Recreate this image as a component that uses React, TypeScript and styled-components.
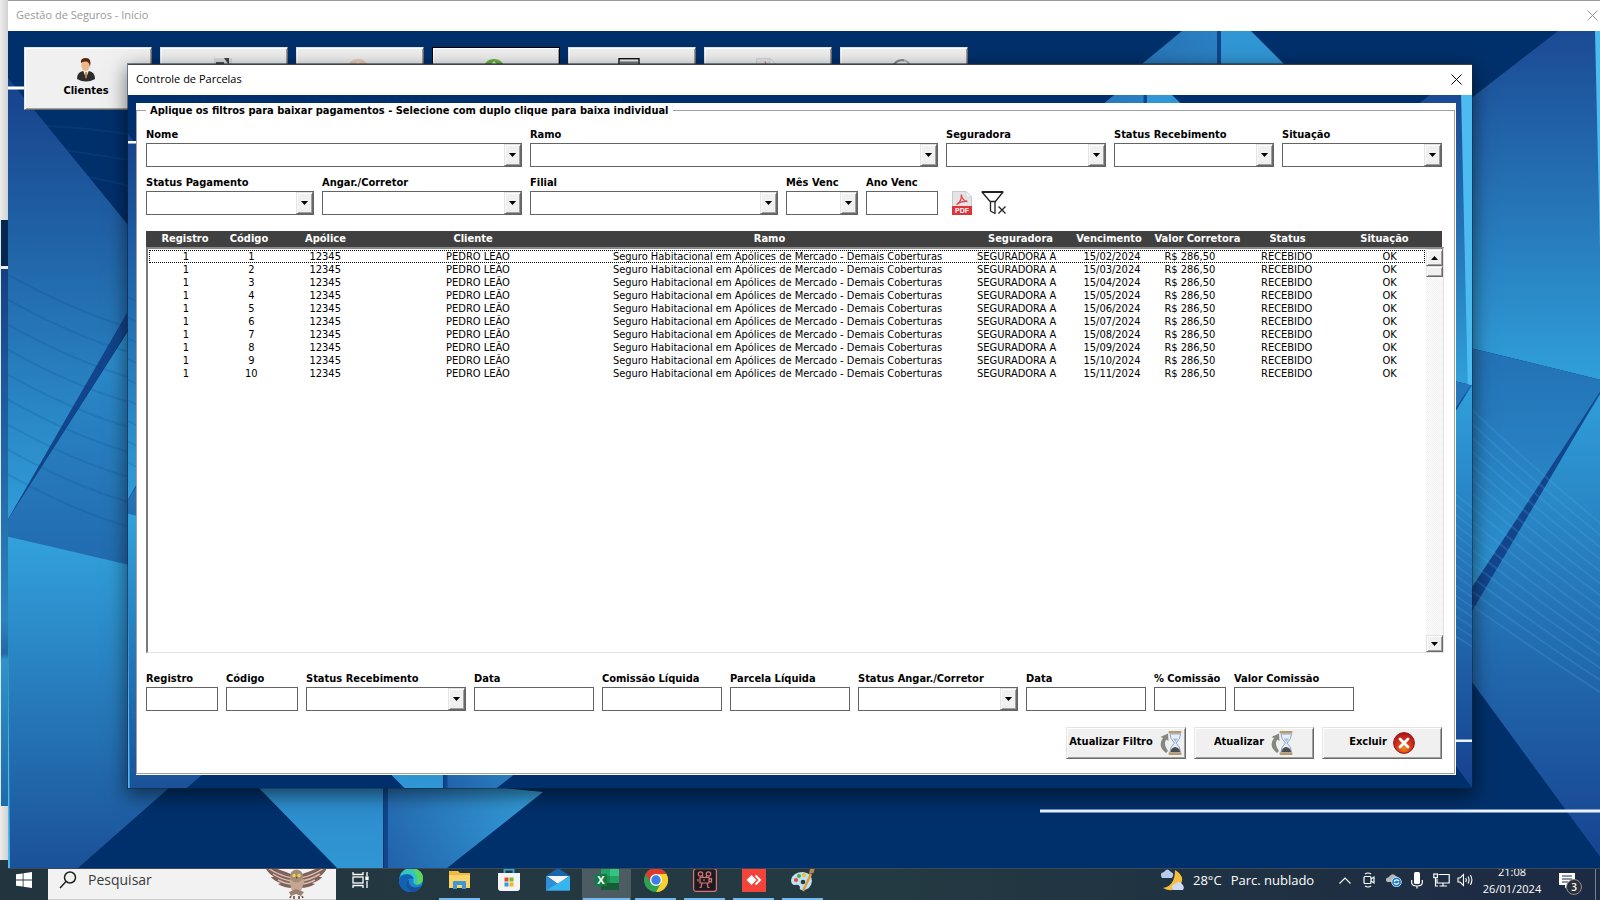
import React, { useId } from "react";
import styled, { createGlobalStyle, css } from "styled-components";

const NAVY = "#00306b";
const FORM_FONT = '"DejaVu Sans Condensed", "DejaVu Sans", Tahoma, sans-serif';
const UI_FONT = '"Open Sans", "Segoe UI", sans-serif';

const GlobalStyle = createGlobalStyle`
  *, *::before, *::after { box-sizing: border-box; }
  body { margin: 0; font-family: ${FORM_FONT}; font-size: 11px; color: #000; background: #ececec; }
  button, input, select { font: inherit; color: inherit; margin: 0; border-radius: 0; }
`;

const raised = css`
  background: #f0f0f0;
  border: 1px solid;
  border-color: #e3e3e3 #696969 #696969 #e3e3e3;
  box-shadow: inset 1px 1px 0 #fff, inset -1px -1px 0 #a0a0a0;
`;

/* ---------- desktop and windows ---------- */

const Desktop = styled.div`
  min-height: 100vh;
  display: flex;
  flex-direction: column;
`;

const Workspace = styled.div`
  flex: 1;
  display: grid;
  grid-template-columns: 8px minmax(0, 1fr);
`;

const BackWindow = styled.div`
  padding-top: 220px;
  padding-bottom: 54px;
  display: flex;
  background: linear-gradient(90deg, #ebebeb, #d2d2d2);
`;

const BackWindowEdge = styled.div`
  flex: 1;
  border-left: 1px solid #d8e8f4;
  background: linear-gradient(
    #04264f 0 46px,
    #e8f2fb 46px 49px,
    #173f80 49px,
    #1c5598 25%,
    #2b83bd 68%,
    #2268a4 74%,
    #3093c8 75%,
    #206ba8 100%
  );
`;

const MainWindow = styled.div`
  position: relative;
  z-index: 1;
  margin-bottom: -9px;
  display: flex;
  flex-direction: column;
  border-top: 1px solid #9a9a9a;
  border-bottom: 1px solid #3c4a58;
  background: ${NAVY};
  overflow: hidden;
`;

const TitleBar = styled.header<{ $active?: boolean }>`
  position: relative;
  display: flex;
  justify-content: space-between;
  height: 30px;
  padding-left: 8px;
  background: #fff;
  font-family: ${UI_FONT};
  font-size: 11px;
  line-height: 28px;
  color: ${p => (p.$active ? "#000" : "#999")};
`;

const CloseButton = styled.button<{ $edge?: boolean }>`
  display: grid;
  place-items: center;
  width: ${p => (p.$edge ? 15 : 31)}px;
  height: 28px;
  padding: 0;
  border: 0;
  background: none;
`;

const WindowBody = styled.div`
  position: relative;
  flex: 1;
  display: flex;
  flex-direction: column;
`;

const ArtSvg = styled.svg<{ $overhang: number }>`
  position: absolute;
  top: 0;
  left: 0;
  width: calc(100% + ${p => p.$overhang}px);
  height: 100%;
`;

const Toolbar = styled.nav`
  position: relative;
  display: flex;
  gap: 8px;
  padding: 16px 16px 0;
`;

const ToolButton = styled.button<{ $focused?: boolean }>`
  ${raised}
  width: 128px;
  height: 63px;
  padding: 10px 4px 0 0;
  display: flex;
  flex-direction: column;
  align-items: center;
  gap: 2px;
  font-weight: 700;
  line-height: 14px;
  outline: ${p => (p.$focused ? "1px solid #000" : "none")};
  outline-offset: -1px;
`;

const Dialog = styled.section`
  position: relative;
  flex: 1;
  margin: -46px 128px 80px 120px;
  display: flex;
  flex-direction: column;
  border-top: 1px solid #444;
  background: ${NAVY};
  box-shadow: 0 0 0 1px rgba(20, 40, 60, 0.5), 0 6px 18px 2px rgba(0, 0, 0, 0.5);
`;

const Panel = styled.form`
  position: relative;
  flex: 1;
  display: flex;
  margin: 8px 16px 13px 8px;
  background: #fff;
`;

const FilterGroup = styled.fieldset`
  flex: 1;
  min-width: 0;
  margin: 0 1px 1px 0;
  padding: 10px 12px 14px 9px;
  border: 1px solid #a0a0a0;
  display: flex;
  flex-direction: column;
`;

const Legend = styled.legend`
  padding: 1px 4px 0;
  font-weight: 700;
  line-height: 13px;
`;

const Stack = styled.div`
  flex: 1;
  display: flex;
  flex-direction: column;
`;

/* ---------- form controls ---------- */

const FieldRow = styled.div<{ $columns: string; $gapTop?: number }>`
  display: grid;
  grid-template-columns: ${p => p.$columns};
  column-gap: 8px;
  align-items: end;
  margin-top: ${p => p.$gapTop ?? 0}px;
`;

const FieldBox = styled.div`
  min-width: 0;
  display: flex;
  flex-direction: column;
`;

const Label = styled.label`
  font-weight: 700;
  line-height: 16px;
  white-space: nowrap;
`;

const TextInput = styled.input`
  width: 100%;
  height: 24px;
  padding: 0 4px;
  border: 1px solid #646464;
  background: #fff;
  outline: none;
`;

const ComboFrame = styled.div`
  display: grid;
  height: 24px;
`;

const Select = styled.select`
  grid-area: 1 / 1;
  appearance: none;
  width: 100%;
  height: 24px;
  padding: 0 18px 0 4px;
  border: 1px solid #646464;
  background: #fff;
  outline: none;
`;

const ComboArrow = styled.span`
  ${raised}
  grid-area: 1 / 1;
  justify-self: end;
  display: grid;
  place-items: center;
  width: 17px;
  height: 22px;
  margin: 1px 1px 0 0;
  pointer-events: none;
`;

const IconGroup = styled.div`
  display: flex;
  gap: 4px;
  padding-left: 2px;
`;

const IconButton = styled.button`
  display: grid;
  place-items: center;
  width: 28px;
  height: 24px;
  padding: 0;
  border: 0;
  background: none;
`;

/* ---------- table ---------- */

const HEAD_COLUMNS = "78fr 50fr 103fr 192fr 401fr 101fr 76fr 101fr 79fr 115fr";
const BODY_COLUMNS = "74fr 57fr 91fr 215fr 385fr 94fr 97fr 59fr 135fr 71fr";

const GridArea = styled.div`
  flex: 1;
  margin: 16px -2px 0 0;
  min-height: 200px;
  display: grid;
  grid-template-rows: 16px minmax(0, 1fr);
  grid-template-columns: minmax(0, 1fr) 18px;
`;

const ListFrame = styled.div`
  grid-area: 2 / 1 / 3 / 3;
  border: 1px solid;
  border-width: 2px 1px 1px 2px;
  border-color: #8a8a8a #e3e3e3 #e3e3e3 #7a7a7a;
`;

const Table = styled.table`
  grid-area: 1 / 1 / 3 / 3;
  display: block;
  line-height: 13px;
`;

const Head = styled.thead`
  display: block;
  margin-right: 2px;
  background: #404040;
  color: #fff;
`;

const HeadRow = styled.tr`
  display: grid;
  grid-template-columns: ${HEAD_COLUMNS};
  height: 16px;
`;

const HeadCell = styled.th`
  padding: 0;
  line-height: 15px;
  text-align: center;
  white-space: nowrap;
`;

const Body = styled.tbody`
  display: block;
  padding: 3px 19px 0 3px;
`;

const BodyRow = styled.tr<{ $focused?: boolean }>`
  display: grid;
  grid-template-columns: ${BODY_COLUMNS};
  height: 13px;
  outline: ${p => (p.$focused ? "1px dotted #000" : "none")};
  outline-offset: ${p => (p.$focused ? "-1px" : "0")};
`;

const Cell = styled.td`
  padding: 0;
  min-width: 0;
  display: flex;
  justify-content: center;
  white-space: nowrap;
`;

const ScrollBar = styled.div`
  grid-area: 2 / 2;
  display: flex;
  flex-direction: column;
  margin: 2px 1px 1px 0;
  background: repeating-conic-gradient(#f0f0f0 0 25%, #fff 0 50%) 0 0 / 2px 2px;
`;

const ScrollButton = styled.button`
  ${raised}
  height: 17px;
  padding: 0;
  display: grid;
  place-items: center;
`;

const ScrollThumb = styled.div`
  ${raised}
  height: 11px;
  margin-bottom: auto;
`;

/* ---------- actions ---------- */

const Actions = styled.div`
  display: flex;
  justify-content: flex-end;
  gap: 8px;
  margin-top: 16px;
`;

const ActionButton = styled.button`
  ${raised}
  width: 120px;
  height: 32px;
  padding: 0;
  display: flex;
  align-items: center;
  justify-content: center;
  gap: 6px;
  font-weight: 700;
  white-space: nowrap;
`;

const ActionText = styled.span`
  padding-bottom: 4px;
`;

/* ---------- taskbar ---------- */

const Taskbar = styled.footer`
  display: flex;
  height: 40px;
  background: linear-gradient(90deg, #22353e, #243a42 55%, #1f3242 75%, #1d2a44);
  color: #fff;
  font-family: ${UI_FONT};
  font-size: 13px;
`;

const TaskButton = styled.button<{ $open?: boolean; $active?: boolean; $width?: number }>`
  position: relative;
  display: grid;
  place-items: center;
  width: ${p => p.$width ?? 49}px;
  height: 40px;
  padding: 0;
  border: 0;
  background: ${p => (p.$active ? "#4d5c63" : "none")};
  &::after {
    content: "";
    position: absolute;
    inset: auto ${p => (p.$active ? 1 : 4)}px 0;
    height: 2px;
    background: ${p => (p.$open ? "#76b9ed" : "none")};
  }
`;

const SearchBox = styled.label`
  display: flex;
  align-items: center;
  width: 288px;
  padding-left: 11px;
  gap: 11px;
  background: #f2f2f2;
  border-bottom: 1px solid #ccc;
`;

const SearchInput = styled.input`
  flex: 1;
  min-width: 0;
  padding: 0;
  border: 0;
  background: none;
  outline: none;
  font-size: 14px;
  &::placeholder { color: #3a3a3a; opacity: 1; }
`;

const Tray = styled.div`
  margin-left: auto;
  display: flex;
  align-items: center;
`;

const Weather = styled.button`
  display: flex;
  align-items: center;
  gap: 9px;
  padding: 0;
  width: 173px;
  border: 0;
  background: none;
  white-space: nowrap;
`;

const TrayButton = styled.button`
  display: grid;
  place-items: center;
  width: 24px;
  height: 40px;
  padding: 0;
  border: 0;
  background: none;
`;

const Clock = styled.div`
  width: 70px;
  text-align: center;
  font-size: 11px;
  line-height: 17px;
`;

const Notifications = styled.button`
  position: relative;
  width: 40px;
  height: 40px;
  margin-right: 8px;
  padding: 0;
  border: 0;
  background: none;
  display: grid;
  place-items: center;
`;

const Badge = styled.span`
  position: absolute;
  right: 5px;
  bottom: 5px;
  width: 16px;
  height: 16px;
  border: 1px solid #8a8f96;
  border-radius: 50%;
  background: #2c3038;
  font-size: 10px;
  line-height: 14px;
  font-weight: 600;
`;

const ShowDesktop = styled.button`
  width: 5px;
  height: 40px;
  padding: 0;
  border: 0;
  border-left: 1px solid #77808c;
  background: none;
`;

/* ---------- drawings ---------- */

const RIGHT_LINES = Array.from({ length: 15 }, (_, i) => i);
const LEFT_LINES = Array.from({ length: 9 }, (_, i) => i);

function Art({ overhang = 0 }: { overhang?: number }) {
  const id = useId();
  const g = (n: string) => `url(#${id}${n})`;
  const grad = (n: string, from: string, to: string, [x1, y1, x2, y2] = [0, 0, 0, 1]) => (
    <linearGradient id={id + n} x1={x1} y1={y1} x2={x2} y2={y2}>
      <stop offset="0" stopColor={from} />
      <stop offset="1" stopColor={to} />
    </linearGradient>
  );
  return (
    <ArtSvg $overhang={overhang} viewBox="8 31 1600 838" preserveAspectRatio="none" aria-hidden="true">
      <defs>
        {grad("a", "#17418a", "#309dd8")}
        {grad("b", "#309ad6", "#2168ad")}
        {grad("c", "#32a2dc", "#1b5198")}
        {grad("d", "#1b4a94", "#30a0da")}
        {grad("e", "#2270b4", "#2f9ad6")}
        {grad("f", "#30a0da", "#17418e")}
        {grad("h", "#2368ae", "#2b80c2", [0, 0, 1, 0])}
        {grad("i", "#2a7fc4", "#3096d4")}
        {grad("j", "#36a6e0", "#2262aa", [1, 0.4, 0, 1])}
      </defs>
      <rect x="8" y="31" width="1600" height="838" fill={NAVY} />
      <path d="M127 224 L8 78 L8 520 L127 318Z" fill={g("a")} />
      <path d="M127 224 L190 300 L127 330Z" fill="#1c5a9e" />
      <path d="M8 520 L127 313 V332Z" fill="#12458c" />
      <path d="M8 520 L127 333 L190 250 V582 L8 537Z" fill={g("b")} />
      <path d="M8 537 L190 580 L260 700 L170 788 L78 869 H8Z" fill={g("c")} />
      <path d="M8 640 V869 H10Z" fill="#4cbcf0" />
      <g fill="none" stroke="#0a3f80" strokeOpacity=".15" strokeWidth="2">
        {LEFT_LINES.map(i => (
          <path key={i} d={`M8 ${275 + i * 25} Q70 ${310 + i * 25} 127 ${327 + i * 25}`} />
        ))}
      </g>
      <g fill="none" stroke="#1c5a9c" strokeOpacity=".2" strokeWidth="2">
        <path d="M45 126 Q90 128 128 134" />
        <path d="M62 150 Q95 155 128 160" />
        <path d="M82 176 Q105 180 128 186" />
      </g>
      <path d="M8 88 H130" stroke="#fff" strokeWidth="3" />

      <path d="M180 700 L258 788 L337 869 H383 V700Z" fill={g("i")} />
      <path d="M388 700 V869 H447 L543 793 L505 789Z" fill={g("j")} />
      <path d="M382 700 H388 L388 869 H384Z" fill="#12458c" />

      <path d="M1050 140 L1182 31 H1219 V140Z" fill={g("h")} />
      <path d="M1217 31 H1222 V140 H1217Z" fill="#12458c" />
      <path d="M1221 31 H1251 L1350 130 H1221Z" fill="#3096d4" />

      <path d="M1558 31 H1608 V382 L1420 336 V138Z" fill={g("d")} />
      <path d="M1595 31 H1608 V382 H1603Z" fill="#4cbcf0" />
      <path d="M1420 336 L1608 382 L1450 636 L1420 560Z" fill={g("e")} />
      <path d="M1608 382 V869 L1472 683 L1466 610Z" fill={g("f")} />
      <path d="M1608 380 L1472 588 L1455 640 L1472 612Z" fill="#12458c" />
      <g fill="none" stroke="#56b4ea" strokeOpacity=".2" strokeWidth="2">
        {RIGHT_LINES.map(i => (
          <path key={i} d={`M1472 ${410 + i * 14} Q1530 ${466 + i * 13} 1608 ${530 + i * 12}`} />
        ))}
      </g>
      <path d="M1472 683 L1608 869 H1472Z" fill={NAVY} />
      <path d="M1040 812 H1608" stroke="#e8f4ff" strokeWidth="3" />
    </ArtSvg>
  );
}

const Cross = () => (
  <svg width="11" height="11" viewBox="0 0 11 11" stroke="currentColor" fill="none" aria-hidden="true">
    <path d="M.5 .5 L10.5 10.5 M10.5 .5 L.5 10.5" />
  </svg>
);

const Triangle = ({ up }: { up?: boolean }) => (
  <svg width="7" height="4" viewBox="0 0 7 4" aria-hidden="true">
    <path d={up ? "M0 4 H7 L3.5 0Z" : "M0 0 H7 L3.5 4Z"} />
  </svg>
);

const PersonIcon = () => (
  <svg width="24" height="24" viewBox="0 0 24 24" aria-hidden="true">
    <path d="M3 21 Q3 14 9 13 L15 13 Q21 14 21 21 Q12 26 3 21Z" fill="#2c2c2e" />
    <path d="M9 12.500 L12 20 L15 12.500Z" fill="#e8e8e8" />
    <path d="M11.300 14 H12.800 L13 19 L12 21 L11 19Z" fill="#c87a20" />
    <ellipse cx="11.500" cy="7" rx="4.300" ry="6" fill="#eeb98a" />
    <path d="M7 5 Q6 0 12 0 Q18 0 16 9 Q15.500 4.500 12.500 3.600 Q9 3 7 5Z" fill="#5e2612" />
  </svg>
);

const PenDocIcon = () => (
  <svg width="24" height="24" viewBox="0 0 24 24" aria-hidden="true">
    <path d="M4 0 H22 V22 H4Z" fill="#dcdcdc" />
    <path d="M14 0 H19 V7Z" fill="#444" />
    <path d="M6 5 H14" stroke="#555" strokeWidth="2" />
  </svg>
);

const DiscIcon = ({ fill, arrow }: { fill: string; arrow: string }) => (
  <svg width="24" height="24" viewBox="0 0 24 24" aria-hidden="true">
    <circle cx="12" cy="12" r="11" fill={fill} />
    <path d="M12 3 L18 10 H14 V19 H10 V10 H6Z" fill={arrow} />
  </svg>
);

const WindowIcon = () => (
  <svg width="24" height="24" viewBox="0 0 24 24" fill="none" stroke="#111" aria-hidden="true">
    <rect x="1" y=".7" width="20" height="20" strokeWidth="1.400" />
    <path d="M2 4.500 H20" stroke="#777" strokeWidth="2" />
  </svg>
);

const GaugeIcon = () => (
  <svg width="24" height="24" viewBox="0 0 24 24" fill="none" aria-hidden="true">
    <circle cx="12" cy="11" r="9" stroke="#b4b4b4" strokeWidth="2" />
    <path d="M3 8 Q7 1 14 2.500" stroke="#8a8a8a" strokeWidth="2" />
  </svg>
);

const PdfIcon = ({ faded }: { faded?: boolean }) => (
  <svg width="20" height="24" viewBox="0 0 20 24" opacity={faded ? 0.7 : 1} aria-hidden="true">
    <path d="M.5 .5 H14 L19.500 6 V23.500 H.5Z" fill="#e4e4e6" stroke="#c9c9cb" />
    <path d="M14 .5 V6 H19.500Z" fill="#fafafa" stroke="#c4c4c6" strokeWidth=".6" />
    <path d="M4.500 13.500 Q10 10.500 9.300 3.500 Q10 9.500 15.500 10.500 Q9 10 4.500 13.500Z" fill="none" stroke="#e2474d" strokeWidth="1.300" />
    <rect y="15" width="20" height="9" fill="#dd3439" />
    <text x="10" y="22" fontFamily="Liberation Sans, sans-serif" fontSize="7" fontWeight="700" fill="#fff" textAnchor="middle">PDF</text>
  </svg>
);

const FunnelIcon = () => (
  <svg width="26" height="24" viewBox="0 0 26 24" fill="none" stroke="#222" strokeWidth="1.300" aria-hidden="true">
    <path d="M1 1 H22 L14 11 V22.500 L9.500 20 V11Z" strokeLinejoin="round" />
    <path d="M1 1 H22" strokeWidth="2" />
    <path d="M9.500 10.500 H14" strokeWidth="1.500" />
    <path d="M17.500 15.500 L24.500 22.500 M24.500 15.500 L17.500 22.500" />
  </svg>
);

const HourglassIcon = () => (
  <svg width="24" height="24" viewBox="0 0 24 24" aria-hidden="true">
    <path d="M7 22 Q-2 15 4 7 L1.500 6 L9 2.500 L9.500 10 L7.200 8.500 Q4 14 9 20Z" fill="#85887f" />
    <rect x="9.500" y="0" width="13" height="2.600" rx="1" fill="#b79a6c" />
    <rect x="9.500" y="21.300" width="13" height="2.600" rx="1" fill="#b79a6c" />
    <path d="M11 3 H21.500 Q21.500 8 17 12 Q21.500 16 21.500 21 H11 Q11 16 15.500 12 Q11 8 11 3Z" fill="#e6f0fa" stroke="#8fa6c4" />
    <path d="M11.500 21 Q12 16.500 16.300 16 Q21 17 21 21Z" fill="#4a4f4c" />
    <path d="M13.500 7.500 H19 L16.300 11Z" fill="#a9bdd6" />
  </svg>
);

const DeleteIcon = () => {
  const id = useId();
  return (
    <svg width="22" height="22" viewBox="0 0 22 22" aria-hidden="true">
      <radialGradient id={id} cx=".5" cy=".75" r=".7">
        <stop offset="0" stopColor="#f08a1c" />
        <stop offset=".5" stopColor="#d2371a" />
        <stop offset="1" stopColor="#b3151a" />
      </radialGradient>
      <circle cx="11" cy="11" r="10.400" fill={`url(#${id})`} stroke="#8f1216" />
      <path d="M7 7 L15 15 M15 7 L7 15" stroke="#fff" strokeWidth="2.800" strokeLinecap="round" />
    </svg>
  );
};

const WindowsLogo = () => (
  <svg width="16" height="16" viewBox="0 0 16 16" fill="#fff" aria-hidden="true">
    <path d="M0 2.300 L6.700 1.400 V7.600 H0Z M7.500 1.300 L16 0 V7.600 H7.500Z M0 8.400 H6.700 V14.600 L0 13.700Z M7.500 8.400 H16 V16 L7.500 14.700Z" />
  </svg>
);

const SearchIcon = () => (
  <svg width="18" height="18" viewBox="0 0 18 18" fill="none" stroke="#222" strokeWidth="1.500" aria-hidden="true">
    <circle cx="11" cy="6.500" r="5.500" />
    <path d="M7 10.500 L1 17" />
  </svg>
);

const OwlIcon = () => (
  <svg width="72" height="40" viewBox="0 0 72 40" aria-hidden="true">
    <path d="M0 4 Q10 8 22 12 Q28 14 31 17 L29 28 Q20 28 14 24 L17 23 Q10 21 7 17 L10 17 Q2 12 0 4Z" fill="#80605a" />
    <path d="M64 4 Q54 8 44 12 Q37 14 34 17 L36 28 Q45 28 51 24 L48 23 Q55 21 58 17 L55 17 Q63 12 64 4Z" fill="#80605a" />
    <path d="M4 8 Q14 15 28 18 M9 14 Q18 20 28 21 M14 20 Q22 24 28 24 M60 8 Q50 15 37 18 M56 14 Q46 20 37 21 M51 20 Q43 24 37 24" stroke="#d8bfae" strokeWidth="1.500" fill="none" />
    <path d="M25 20 Q32 15 41 20 L37 31 L32 34 L28 31Z" fill="#c4a692" />
    <path d="M25 32 L32 29 L40 32 L37 36 L32 34 L27 36Z" fill="#9c7f70" />
    <ellipse cx="32.500" cy="16" rx="6.500" ry="6.500" fill="#a58c78" />
    <circle cx="30" cy="15.500" r="1.700" fill="#e9d44a" />
    <circle cx="35" cy="15.500" r="1.700" fill="#e9d44a" />
    <path d="M32 17 H33.500 L32.700 19Z" fill="#4a3a30" />
    <path d="M27 36 L26 38 M30 36 V39 M35 36 V39 M38 36 L39 38" stroke="#5c463c" strokeWidth="1.500" />
  </svg>
);

const TaskViewIcon = () => (
  <svg width="18" height="18" viewBox="0 0 18 18" fill="none" stroke="#fff" strokeWidth="1.300" aria-hidden="true">
    <path d="M1 1 V3.500 H11 V1 M1 17 V14.500 H11 V17" />
    <rect x="1" y="6" width="10" height="6" />
    <path d="M15 1 V5 M15 10 V17" />
    <rect x="14" y="6" width="2" height="2.500" fill="#fff" />
  </svg>
);

const EdgeIcon = () => (
  <svg width="24" height="24" viewBox="0 0 24 24" aria-hidden="true">
    <circle cx="12" cy="12" r="12" fill="#1a86d0" />
    <path d="M1 8 Q4 0 12 0 Q24 1 24 11 Q23 17 17 16.500 Q14 16 14.500 13 Q15 7 9 6 Q4 5.500 1 8Z" fill="#37c5c0" />
    <path d="M14 .3 Q24 2 24 11 Q23 17 17 16.500 Q20 11 17 6Z" fill="#5fd45a" />
    <path d="M0 12 Q2 6 9 6.500 Q14 7 14.700 11 Q8 9 7.500 15 Q8 21 13 23.900 Q0 24 0 12Z" fill="#0f62b4" />
    <path d="M10 12 Q9 19 16 19.500 Q20 19.500 22 17.500 Q19 24 13 23.900 Q7 21 7.500 15 Q8 12 10 12Z" fill="#1b4f9c" />
  </svg>
);

const ExplorerIcon = () => (
  <svg width="24" height="24" viewBox="0 0 24 24" aria-hidden="true">
    <path d="M1 3 H10 L12 5 H22 V20 H1Z" fill="#f3b93c" />
    <path d="M1 7 H22 V20 H1Z" fill="#fbd568" />
    <path d="M5 21 V14 Q5 13 6 13 H17 Q18 13 18 14 V21 H14 V17 H9 V21Z" fill="#3f97d8" />
  </svg>
);

const StoreIcon = () => (
  <svg width="24" height="24" viewBox="0 0 24 24" aria-hidden="true">
    <path d="M7.500 6 V1.500 H16.500 V6" fill="none" stroke="#38a3df" strokeWidth="2" />
    <path d="M1 5 H23 V20 Q23 23 20 23 H4 Q1 23 1 20Z" fill="#f4f4f4" />
    <path d="M7.500 9.500 H11.500 V13.500 H7.500Z" fill="#e74c2c" />
    <path d="M12.500 9.500 H16.500 V13.500 H12.500Z" fill="#7db928" />
    <path d="M7.500 14.500 H11.500 V18.500 H7.500Z" fill="#2c9fe0" />
    <path d="M12.500 14.500 H16.500 V18.500 H12.500Z" fill="#f5b51e" />
  </svg>
);

const MailIcon = () => (
  <svg width="24" height="24" viewBox="0 0 24 24" aria-hidden="true">
    <path d="M0 8 L12 0 L24 8 V22 H0Z" fill="#1a65b0" />
    <path d="M1 8 H23 L12 16Z" fill="#f5f5f5" />
    <path d="M0 8 L12 16 L24 22.500 H0Z" fill="#2c8fd8" />
    <path d="M24 8 L0 22.500 H24Z" fill="#38b4ee" />
  </svg>
);

const ExcelIcon = () => (
  <svg width="24" height="24" viewBox="0 0 24 24" aria-hidden="true">
    <path d="M6 1 H24 V22 H6Z" fill="#1f8a50" />
    <path d="M15 1 H24 V8 H15Z" fill="#35c481" />
    <path d="M6 1 H15 V8 H6Z" fill="#23a366" />
    <path d="M15 8 H24 V15 H15Z" fill="#22a163" />
    <path d="M6 15 H24 V22 H6Z" fill="#185c37" />
    <rect y="6" width="12" height="12" rx="1" fill="#117c42" />
    <text x="6" y="16" fontFamily="Open Sans, sans-serif" fontSize="11" fontWeight="700" fill="#fff" textAnchor="middle">X</text>
  </svg>
);

const ChromeIcon = () => (
  <svg width="24" height="24" viewBox="0 0 24 24" aria-hidden="true">
    <circle cx="12" cy="12" r="12" fill="#2fa24f" />
    <path d="M1.600 6 A12 12 0 0 1 22.400 6 H12 L7 15Z" fill="#db3b2e" />
    <path d="M22.400 6 A12 12 0 0 1 12 24 L17.200 15 L14 6Z" fill="#fccf2f" />
    <circle cx="12" cy="12" r="6" fill="#fff" />
    <circle cx="12" cy="12" r="4.700" fill="#3b7fe8" />
  </svg>
);

const CameraAppIcon = () => (
  <svg width="24" height="24" viewBox="0 0 24 24" fill="none" stroke="#d8766b" strokeWidth="1.200" aria-hidden="true">
    <rect x=".6" y=".6" width="22.800" height="22.800" rx="2.500" fill="#1d1a24" />
    <circle cx="7.500" cy="6" r="2.200" />
    <circle cx="15.500" cy="6" r="2.200" />
    <path d="M9 7.500 L10.500 9.500 M14 7.500 L12.500 9.500 M7 9.500 H16 V15 H7Z M16 11.500 L18.500 10.500 V14 L16 13 M5 11 V13.500 M9 15 L8 19.500 H6.500 M14 15 L15 19.500 H16.500 M10 12 H12" />
  </svg>
);

const AnyDeskIcon = () => (
  <svg width="24" height="24" viewBox="0 0 24 24" aria-hidden="true">
    <rect width="24" height="24" fill="#f4433a" />
    <path d="M9.500 7 L14.500 12 L9.500 17 L4.500 12Z" fill="#fff" />
    <path d="M13.500 7.500 L18 12 L13.500 16.500" fill="none" stroke="#fff" strokeWidth="2" />
  </svg>
);

const PaintIcon = () => (
  <svg width="24" height="24" viewBox="0 0 24 24" aria-hidden="true">
    <path d="M12 4 Q21 5 21 13 Q20 22 11 22 Q8 22 9 19 Q8 16 4 17 Q0 17 0 12 Q2 4 12 4Z" fill="#bfe0ef" />
    <circle cx="5" cy="12" r="2" fill="#e04b3c" />
    <circle cx="8" cy="8" r="2" fill="#52a846" />
    <circle cx="13" cy="7" r="2" fill="#f2bc2e" />
    <circle cx="12" cy="14" r="2.300" fill="#273b46" />
    <path d="M12 23 L20 6" stroke="#e39a3c" strokeWidth="2.500" />
    <path d="M18 6 L19 1 L24 0 L22.500 5Z" fill="#b98555" />
  </svg>
);

const WeatherIcon = () => (
  <svg width="24" height="26" viewBox="0 0 24 26" aria-hidden="true">
    <path d="M15 3 Q27 10 19 20 Q12 26 3 21 Q15 19 15 3Z" fill="#f8bf3e" />
    <path d="M2 11 Q-1 6 4 5 Q7 0 11 5 Q15 6 12 11Z" fill="#b7cdef" />
    <path d="M13 23 Q10 18 15 17 Q19 13 22 17 Q25 20 23 23Z" fill="#cddcf4" />
  </svg>
);

const ChevronUp = () => (
  <svg width="12" height="7" viewBox="0 0 12 7" fill="none" stroke="#fff" strokeWidth="1.200" aria-hidden="true">
    <path d="M.5 6.500 L6 1 L11.500 6.500" />
  </svg>
);

const MeetIcon = () => (
  <svg width="12" height="16" viewBox="0 0 12 16" fill="none" stroke="#fff" strokeWidth="1.200" aria-hidden="true">
    <path d="M2 2 Q5 0 8 2 M2 14 Q5 16 8 14" />
    <rect x="1" y="4.500" width="7" height="7" rx="1" />
    <path d="M8 7 L11 5 V11 L8 9" />
  </svg>
);

const CloudSyncIcon = () => (
  <svg width="17" height="14" viewBox="0 0 17 14" aria-hidden="true">
    <path d="M2 9 Q-1 5 4 4 Q7 -1 11 3 Q13 4 12 9Z" fill="#b5b8bd" />
    <circle cx="11.500" cy="9" r="4.800" fill="#1c79c8" stroke="#e8f2fb" strokeWidth=".8" />
    <path d="M9 8.500 Q11.500 5.500 14 8 M14 9.700 Q11.500 12.500 9 10" fill="none" stroke="#fff" strokeWidth="1.200" />
  </svg>
);

const MicIcon = () => (
  <svg width="12" height="17" viewBox="0 0 12 17" aria-hidden="true">
    <rect x="3" width="6" height="12" rx="1.500" fill="#fff" />
    <path d="M.7 8 V11 Q1 14 6 14 Q11 14 11.300 11 V8 M6 14 V16.500" fill="none" stroke="#fff" strokeWidth="1.200" />
  </svg>
);

const NetworkIcon = () => (
  <svg width="17" height="14" viewBox="0 0 17 14" fill="none" stroke="#fff" strokeWidth="1.200" aria-hidden="true">
    <path d="M5.500 1.500 H16.200 V10 H4 V6 M10 10 V13 M6.500 13 H14" />
    <rect x=".8" y="1" width="3.600" height="3.600" />
    <path d="M2.500 5 V13 H5" />
  </svg>
);

const SpeakerIcon = () => (
  <svg width="17" height="14" viewBox="0 0 17 14" fill="none" stroke="#fff" strokeWidth="1.100" aria-hidden="true">
    <path d="M1 5 H3 L6.500 1.500 V12.500 L3 9 H1Z M8.700 5 Q10 7 8.700 9 M11 3.500 Q13.200 7 11 10.500 M13.300 2 Q16.500 7 13.300 12" />
  </svg>
);

const NoteIcon = () => (
  <svg width="16" height="17" viewBox="0 0 16 17" aria-hidden="true">
    <path d="M0 1 H16 V13 H9 L6 16.500 V13 H0Z" fill="#fff" />
    <path d="M3 4 H13 M3 7 H13 M3 10 H9" stroke="#1d2a44" />
  </svg>
);

/* ---------- composed fields ---------- */

type FieldSpec = { label: string; kind: "combo" | "text" };

function Field({ label, kind }: FieldSpec) {
  const id = useId();
  return (
    <FieldBox>
      <Label htmlFor={id}>{label}</Label>
      {kind === "text" ? (
        <TextInput id={id} type="text" />
      ) : (
        <ComboFrame>
          <Select id={id} defaultValue="">
            <option value="" />
          </Select>
          <ComboArrow><Triangle /></ComboArrow>
        </ComboFrame>
      )}
    </FieldBox>
  );
}

const combo = (label: string): FieldSpec => ({ label, kind: "combo" });
const text = (label: string): FieldSpec => ({ label, kind: "text" });

const FILTERS_TOP = [combo("Nome"), combo("Ramo"), combo("Seguradora"), combo("Status Recebimento"), combo("Situação")];
const FILTERS_BOTTOM = [combo("Status Pagamento"), combo("Angar./Corretor"), combo("Filial"), combo("Mês Venc"), text("Ano Venc")];
const DETAILS = [
  text("Registro"), text("Código"), combo("Status Recebimento"), text("Data"), text("Comissão Líquida"),
  text("Parcela Líquida"), combo("Status Angar./Corretor"), text("Data"), text("% Comissão"), text("Valor Comissão"),
];

const HEADERS = ["Registro", "Código", "Apólice", "Cliente", "Ramo", "Seguradora", "Vencimento", "Valor Corretora", "Status", "Situação"];
const ROWS = Array.from({ length: 10 }, (_, i) => [
  "1",
  String(i + 1),
  "12345",
  "PEDRO LEÃO",
  "Seguro Habitacional em Apólices de Mercado - Demais Coberturas",
  "SEGURADORA A",
  `15/${String(i + 2).padStart(2, "0")}/2024`,
  "R$ 286,50",
  "RECEBIDO",
  "OK",
]);

const APPS: { icon: React.ReactNode; open?: boolean; active?: boolean }[] = [
  { icon: <EdgeIcon /> },
  { icon: <ExplorerIcon />, open: true },
  { icon: <StoreIcon /> },
  { icon: <MailIcon /> },
  { icon: <ExcelIcon />, open: true, active: true },
  { icon: <ChromeIcon />, open: true },
  { icon: <CameraAppIcon />, open: true },
  { icon: <AnyDeskIcon />, open: true },
  { icon: <PaintIcon />, open: true },
];

const TRAY_ICONS = [ChevronUp, MeetIcon, CloudSyncIcon, MicIcon, NetworkIcon, SpeakerIcon];

export default function App() {
  return (
    <Desktop>
      <GlobalStyle />
      <Workspace>
        <BackWindow><BackWindowEdge /></BackWindow>
        <MainWindow>
          <TitleBar>
            <span>Gestão de Seguros - Início</span>
            <CloseButton type="button" $edge><Cross /></CloseButton>
          </TitleBar>
          <WindowBody>
            <Art overhang={8} />
            <Toolbar>
              <ToolButton type="button"><PersonIcon />Clientes</ToolButton>
              <ToolButton type="button"><PenDocIcon /></ToolButton>
              <ToolButton type="button"><DiscIcon fill="#efcdb8" arrow="#f6e4da" /></ToolButton>
              <ToolButton type="button" $focused><DiscIcon fill="#6bb43f" arrow="#d8efc8" /></ToolButton>
              <ToolButton type="button"><WindowIcon /></ToolButton>
              <ToolButton type="button"><PdfIcon faded /></ToolButton>
              <ToolButton type="button"><GaugeIcon /></ToolButton>
            </Toolbar>

            <Dialog role="dialog">
              <TitleBar $active>
                <span>Controle de Parcelas</span>
                <CloseButton type="button"><Cross /></CloseButton>
              </TitleBar>
              <WindowBody>
                <Art />
                <Panel onSubmit={e => e.preventDefault()}>
                  <FilterGroup>
                    <Legend>Aplique os filtros para baixar pagamentos - Selecione com duplo clique para baixa individual</Legend>
                    <Stack>
                      <FieldRow $columns="376fr 408fr 160fr 160fr 160fr">
                        {FILTERS_TOP.map(f => <Field key={f.label} {...f} />)}
                      </FieldRow>
                      <FieldRow $columns="168fr 200fr 248fr 72fr 72fr 496fr" $gapTop={8}>
                        {FILTERS_BOTTOM.map(f => <Field key={f.label} {...f} />)}
                        <IconGroup>
                          <IconButton type="button"><PdfIcon /></IconButton>
                          <IconButton type="button"><FunnelIcon /></IconButton>
                        </IconGroup>
                      </FieldRow>

                      <GridArea>
                        <ListFrame />
                        <Table>
                          <Head>
                            <HeadRow>{HEADERS.map(h => <HeadCell key={h} scope="col">{h}</HeadCell>)}</HeadRow>
                          </Head>
                          <Body>
                            {ROWS.map((row, i) => (
                              <BodyRow key={row[1]} $focused={i === 0}>
                                {row.map((value, c) => <Cell key={HEADERS[c]}>{value}</Cell>)}
                              </BodyRow>
                            ))}
                          </Body>
                        </Table>
                        <ScrollBar>
                          <ScrollButton type="button"><Triangle up /></ScrollButton>
                          <ScrollThumb />
                          <ScrollButton type="button"><Triangle /></ScrollButton>
                        </ScrollBar>
                      </GridArea>

                      <FieldRow $columns="72fr 72fr 160fr 120fr 120fr 120fr 160fr 120fr 72fr 120fr 80fr" $gapTop={18}>
                        {DETAILS.map((f, i) => <Field key={i} {...f} />)}
                      </FieldRow>
                      <Actions>
                        <ActionButton type="button"><ActionText>Atualizar Filtro</ActionText><HourglassIcon /></ActionButton>
                        <ActionButton type="button"><ActionText>Atualizar</ActionText><HourglassIcon /></ActionButton>
                        <ActionButton type="button"><ActionText>Excluir</ActionText><DeleteIcon /></ActionButton>
                      </Actions>
                    </Stack>
                  </FilterGroup>
                </Panel>
              </WindowBody>
            </Dialog>
          </WindowBody>
        </MainWindow>
      </Workspace>

      <Taskbar>
        <TaskButton type="button" $width={48}><WindowsLogo /></TaskButton>
        <SearchBox>
          <SearchIcon />
          <SearchInput type="text" placeholder="Pesquisar" />
          <OwlIcon />
        </SearchBox>
        <TaskButton type="button" $width={50}><TaskViewIcon /></TaskButton>
        {APPS.map((a, i) => (
          <TaskButton key={i} type="button" $open={a.open} $active={a.active}>{a.icon}</TaskButton>
        ))}
        <Tray>
          <Weather type="button"><WeatherIcon /><span>28°C</span><span>Parc. nublado</span></Weather>
          {TRAY_ICONS.map((Icon, i) => <TrayButton key={i} type="button"><Icon /></TrayButton>)}
          <Clock>
            <div>21:08</div>
            <div>26/01/2024</div>
          </Clock>
          <Notifications type="button"><NoteIcon /><Badge>3</Badge></Notifications>
          <ShowDesktop type="button" />
        </Tray>
      </Taskbar>
    </Desktop>
  );
}
